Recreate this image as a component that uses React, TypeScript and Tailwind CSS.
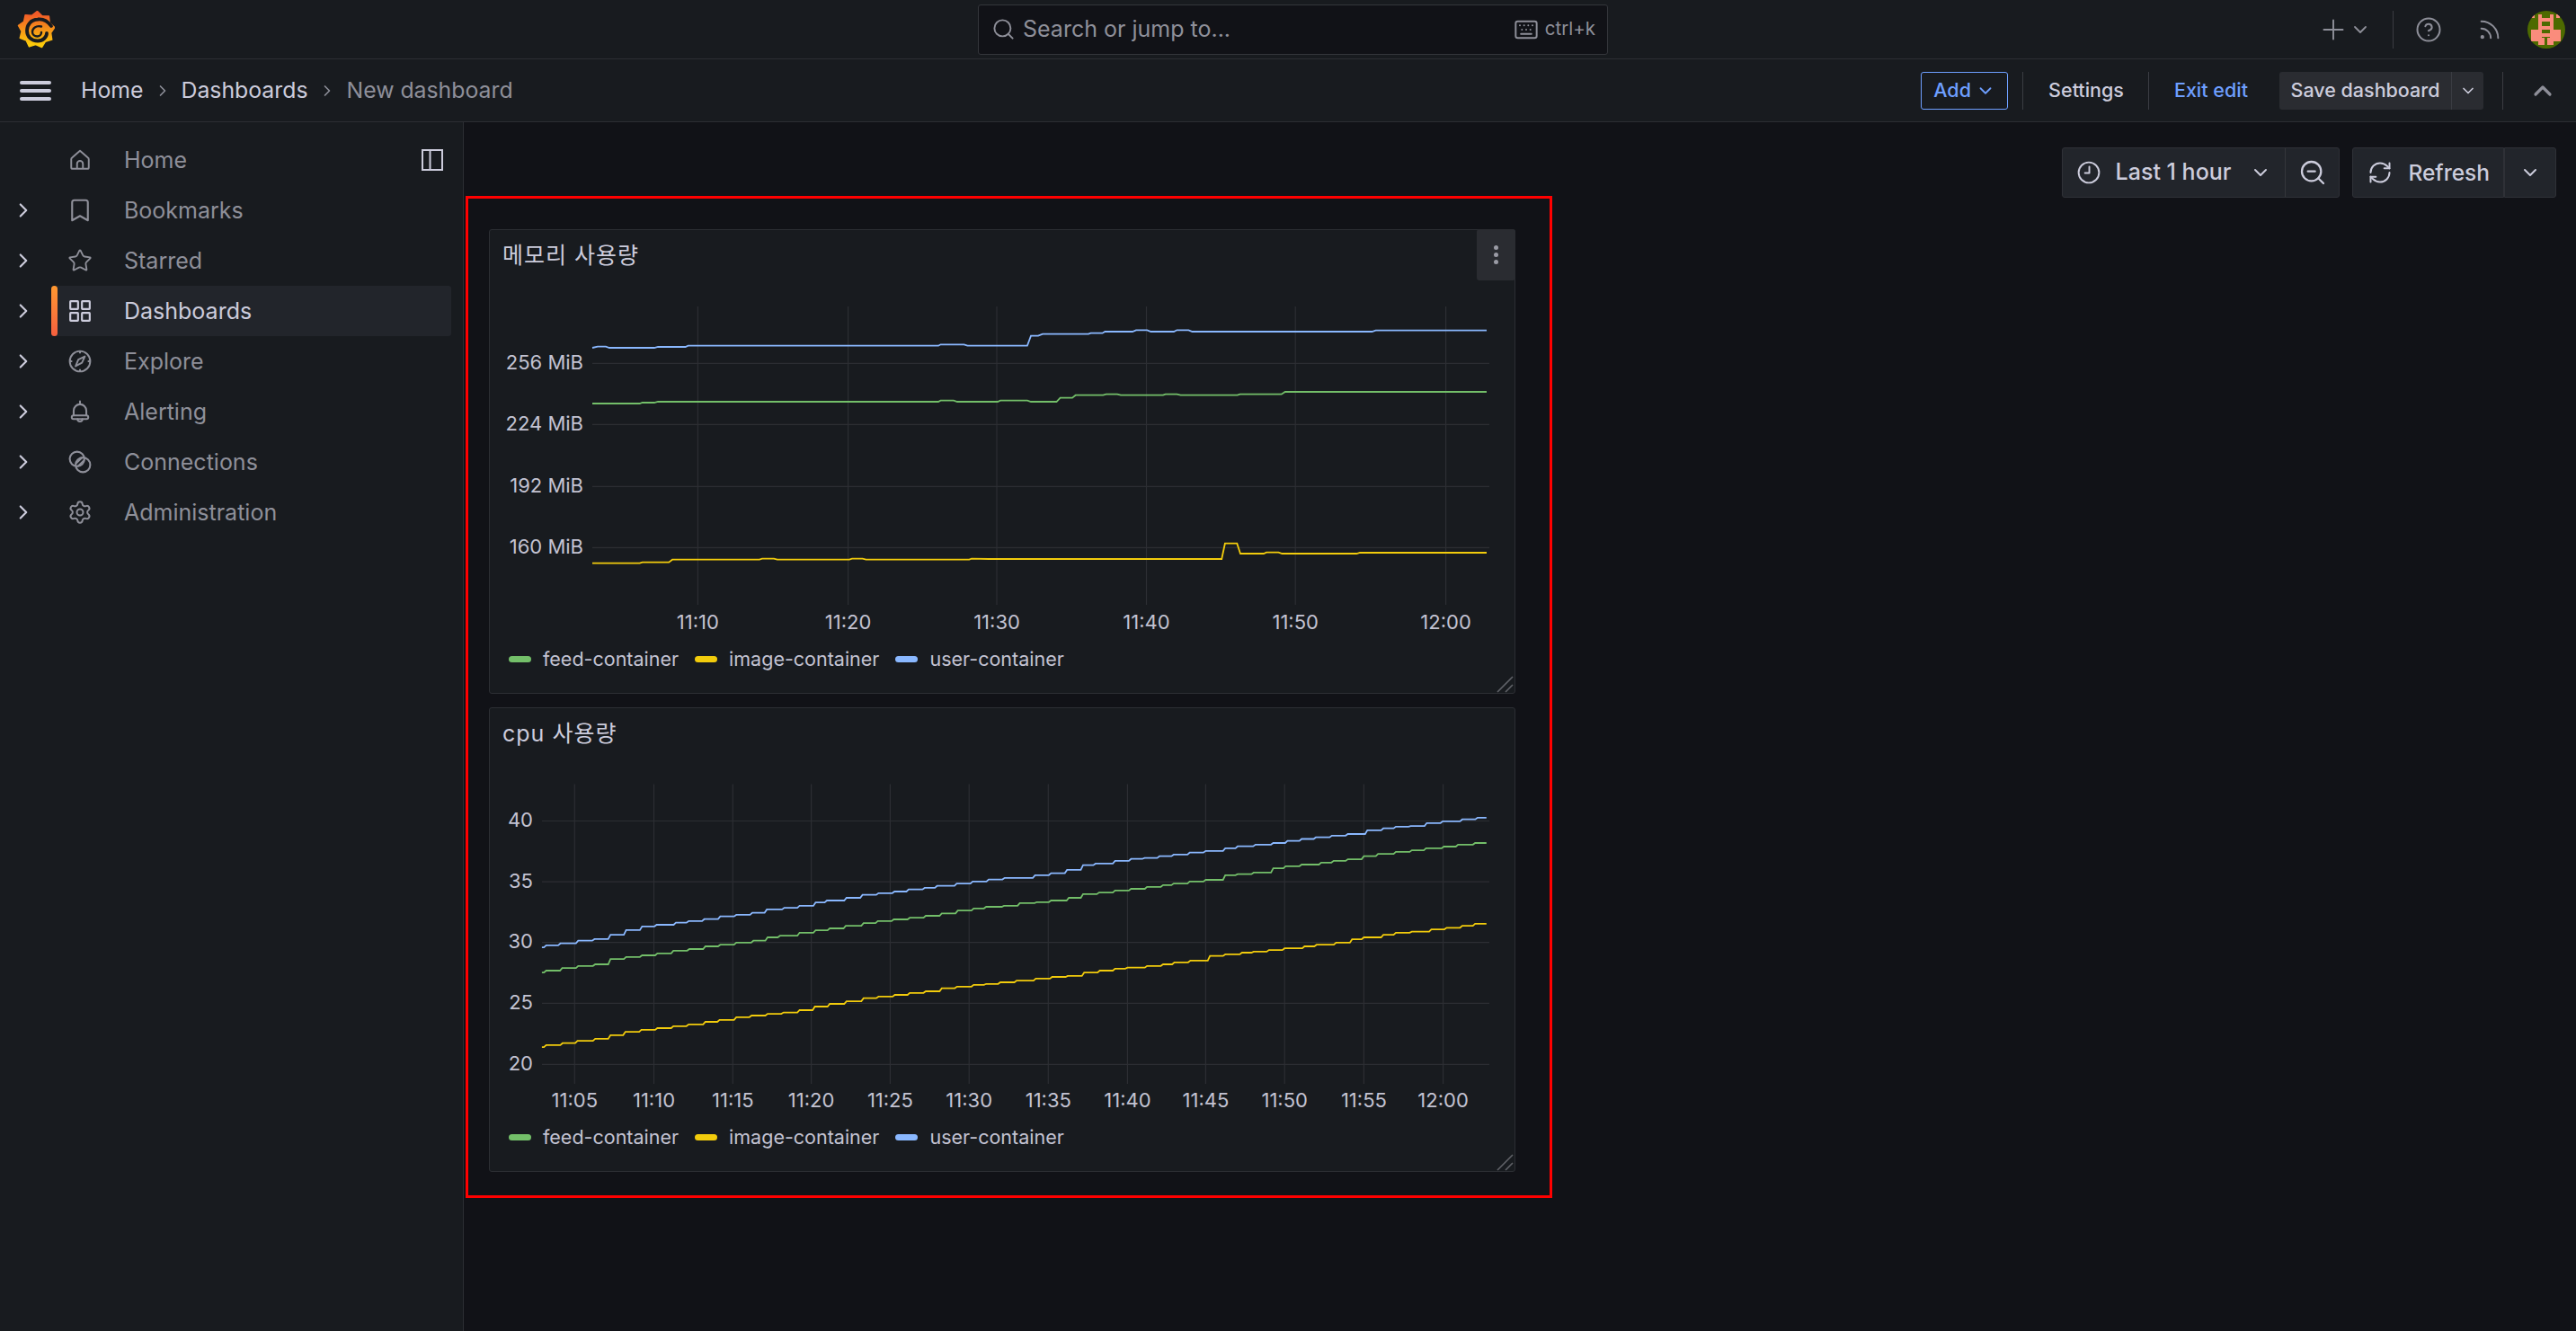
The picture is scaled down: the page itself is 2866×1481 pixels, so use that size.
import { Bookmark, ChevronDown, ChevronRight, ChevronUp, Keyboard, CircleHelp, Plus, RefreshCw, Rss, Search, Settings, Star, ZoomOut } from "lucide-react";
import type { ReactNode } from "react";

const GREEN = "#73bf69";
const YELLOW = "#f2cc0c";
const BLUE = "#8ab8ff";

function HomeIcon({ className }: { className?: string }) {
  return (
    <svg viewBox="0 0 24 24" fill="none" stroke="currentColor" strokeWidth="1.8" strokeLinejoin="round" className={className}>
      <path d="M12 2.5 3.8 9.6c-.5.4-.8 1-.8 1.6v8.3A1.5 1.5 0 0 0 4.5 21h15a1.5 1.5 0 0 0 1.5-1.5v-8.3c0-.6-.3-1.2-.8-1.6Z" />
      <path d="M9 21v-5a3 3 0 0 1 6 0v5" />
    </svg>
  );
}

function AppsIcon({ className }: { className?: string }) {
  return (
    <svg viewBox="0 0 24 24" fill="none" stroke="currentColor" strokeWidth="2" className={className}>
      <rect x="2" y="2" width="8" height="8" rx="0.5" />
      <rect x="14" y="2" width="8" height="8" rx="0.5" />
      <rect x="2" y="14" width="8" height="8" rx="0.5" />
      <rect x="14" y="14" width="8" height="8" rx="0.5" />
    </svg>
  );
}

function CompassIcon({ className }: { className?: string }) {
  return (
    <svg viewBox="0 0 24 24" fill="none" stroke="currentColor" strokeWidth="1.8" strokeLinejoin="round" className={className}>
      <circle cx="12" cy="12" r="10.5" />
      <path d="M12 1.5V4M12 20v2.5M1.5 12H4M20 12h2.5" />
      <path d="M17 7l-3 6.5L7.500 17l2.800-6.800Z" />
    </svg>
  );
}

function BellIcon({ className }: { className?: string }) {
  return (
    <svg viewBox="0 0 24 24" fill="none" stroke="currentColor" strokeWidth="1.9" strokeLinecap="round" strokeLinejoin="round" className={className}>
      <path d="M12 1.5v2.5" />
      <path d="M5.5 16v-5a6.5 6.5 0 0 1 13 0v5" />
      <rect x="3.5" y="16" width="17" height="3.6" rx="1.8" />
      <path d="M9.5 19.6a2.5 2.5 0 0 0 5 0" />
    </svg>
  );
}

function ConnectionsIcon({ className }: { className?: string }) {
  return (
    <svg viewBox="0 0 24 24" fill="none" stroke="currentColor" strokeWidth="1.9" strokeLinecap="round" className={className}>
      <circle cx="9" cy="9" r="7.5" />
      <circle cx="15" cy="15" r="7.5" />
      <path d="M8 13.5 13.5 8M10.5 16 16 10.5" />
    </svg>
  );
}

function ClockIcon({ className }: { className?: string }) {
  return (
    <svg viewBox="0 0 24 24" fill="none" stroke="currentColor" strokeWidth="1.8" strokeLinecap="round" strokeLinejoin="round" className={className}>
      <circle cx="12" cy="12" r="10.5" />
      <path d="M12.5 6v6.5H8" />
    </svg>
  );
}

function DockIcon({ className }: { className?: string }) {
  return (
    <svg viewBox="0 0 24 24" fill="none" stroke="currentColor" strokeWidth="2" className={className}>
      <rect x="1" y="1" width="22" height="22" />
      <path d="M9.5 1v22" />
    </svg>
  );
}

function Logo() {
  const points: string[] = [];
  const teeth = 9;
  for (let i = 0; i < teeth * 2; i++) {
    const r = i % 2 === 0 ? 20.5 : 16.5;
    const a = (i / (teeth * 2)) * Math.PI * 2 - Math.PI / 2 + 0.05;
    points.push(`${(21.5 + r * Math.cos(a)).toFixed(1)},${(21 + r * Math.sin(a)).toFixed(1)}`);
  }
  return (
    <svg viewBox="0 0 42 42" className="w-[42px] h-[42px]">
      <defs>
        <linearGradient id="logo-grad" x1="0" y1="0" x2="0" y2="1">
          <stop offset="8%" stopColor="#f05a28" />
          <stop offset="92%" stopColor="#fbca0a" />
        </linearGradient>
      </defs>
      <polygon points={points.join(" ")} fill="url(#logo-grad)" stroke="url(#logo-grad)" strokeWidth="1.5" strokeLinejoin="round" />
      <path d="M38 17C33 10 27 9 23 9.500C15 10 11 16 11 22C11 29 16 33.500 23 33.500C29 33.500 33 29 33 25" fill="none" stroke="#181b1f" strokeWidth="3.8" strokeLinecap="round" />
      <path d="M27 17.500C21 16 17 19.500 17 23.500C17 26.500 19.500 28.500 22.500 28.500C25 28.500 27 26.500 27 24" fill="none" stroke="#181b1f" strokeWidth="2.4" strokeLinecap="round" />
    </svg>
  );
}

// identicon, cells read off the screenshot
const AVATAR_CELLS = [
  [4, 4, 4, 4], [32, 4, 4, 4],
  [12, 4, 4, 17], [25, 4, 4, 17], [12, 8, 17, 4],
  [16, 17, 9, 4], [4, 21, 12, 13], [25, 21, 12, 13],
  [16, 25, 9, 4], [12, 34, 7, 4], [22, 34, 7, 4], [16, 30, 3, 4], [22, 30, 3, 4],
];

function Avatar() {
  return (
    <svg viewBox="0 0 42 42" className="w-[42px] h-[42px] shrink-0 rounded-full bg-[#4d6a00]">
      {AVATAR_CELLS.map(([x, y, w, h], i) => (
        <rect key={i} x={x} y={y} width={w} height={h} fill="#fa8c7c" />
      ))}
    </svg>
  );
}

function Divider({ className }: { className: string }) {
  return <div className={`w-px h-[42px] bg-[#3a3c42] shrink-0 ${className}`} />;
}

function TopBar() {
  return (
    <header className="h-[66px] shrink-0 grid grid-cols-[1088px_701px_1fr] items-center bg-[#181b1f] border-b border-[#2c2e33]">
      <div className="pl-[19px] pt-[1px]"><Logo /></div>
      <div className="h-[56px] flex items-center bg-[#111217] border border-[#34363b] rounded-[3px] text-[#8e8f99]">
        <Search className="w-[27px] h-[27px] ml-[14px]" strokeWidth={1.7} />
        <span className="ml-[8px] text-[25px]">Search or jump to...</span>
        <Keyboard className="w-[28px] h-[28px] ml-auto" strokeWidth={1.7} />
        <span className="ml-[7px] mr-[13px] text-[20.5px]">ctrl+k</span>
      </div>
      <div className="flex items-center justify-end pr-[12px] text-[#8e8f99]">
        <Plus className="w-[36px] h-[36px]" strokeWidth={1.3} />
        <ChevronDown className="w-[24px] h-[24px]" strokeWidth={1.8} />
        <Divider className="ml-[24px]" />
        <CircleHelp className="w-[30px] h-[30px] ml-[24px]" strokeWidth={1.6} />
        <Rss className="w-[28px] h-[28px] ml-[39px]" strokeWidth={1.7} />
        <div className="ml-[28px]"><Avatar /></div>
      </div>
    </header>
  );
}

function ChevronSep() {
  return <ChevronRight className="w-[20px] h-[20px] text-[#8e8f99] shrink-0" strokeWidth={2} />;
}

function SubBar() {
  return (
    <div className="h-[70px] shrink-0 flex items-center bg-[#181b1f] border-b border-[#2c2e33] text-[#ccccdc]">
      <div className="ml-[22px] w-[35px] flex flex-col gap-[5px]">
        <div className="h-[4px] rounded-full bg-[#ccccdc]" />
        <div className="h-[4px] rounded-full bg-[#ccccdc]" />
        <div className="h-[4px] rounded-full bg-[#ccccdc]" />
      </div>
      <span className="ml-[33px] text-[24.8px]">Home</span>
      <div className="ml-[12px]"><ChevronSep /></div>
      <span className="ml-[10px] text-[24.8px]">Dashboards</span>
      <div className="ml-[12px]"><ChevronSep /></div>
      <span className="ml-[11px] text-[24.8px] text-[#8e8f99]">New dashboard</span>
      <div className="ml-auto flex items-center text-[21.5px] font-medium">
        <div className="w-[97px] h-[42px] flex items-center justify-center gap-[5px] border border-[#6e9fff] rounded-[3px] text-[#6e9fff]">
          Add <ChevronDown className="w-[22px] h-[22px]" strokeWidth={2} />
        </div>
        <Divider className="ml-[16px]" />
        <span className="ml-[28px]">Settings</span>
        <Divider className="ml-[27px]" />
        <span className="ml-[28px] text-[#6e9fff]">Exit edit</span>
        <div className="ml-[35px] flex h-[42px] rounded-[3px] bg-[#2a2c31]">
          <div className="w-[191px] flex items-center justify-center">Save dashboard</div>
          <div className="w-[36px] flex items-center justify-center border-l border-[#3a3c42]">
            <ChevronDown className="w-[20px] h-[20px]" strokeWidth={2} />
          </div>
        </div>
        <Divider className="ml-[21px]" />
        <ChevronUp className="ml-[28px] mr-[21px] w-[32px] h-[32px] text-[#8e8f99]" strokeWidth={2.4} />
      </div>
    </div>
  );
}

const NAV: { label: string; icon: ReactNode; chevron: boolean; active?: boolean; dock?: boolean }[] = [
  { label: "Home", icon: <HomeIcon className="w-[26px] h-[26px]" />, chevron: false, dock: true },
  { label: "Bookmarks", icon: <Bookmark className="w-[30px] h-[30px]" strokeWidth={1.7} />, chevron: true },
  { label: "Starred", icon: <Star className="w-[28px] h-[28px]" strokeWidth={1.6} />, chevron: true },
  { label: "Dashboards", icon: <AppsIcon className="w-[26px] h-[26px]" />, chevron: true, active: true },
  { label: "Explore", icon: <CompassIcon className="w-[26px] h-[26px]" />, chevron: true },
  { label: "Alerting", icon: <BellIcon className="w-[26px] h-[26px]" />, chevron: true },
  { label: "Connections", icon: <ConnectionsIcon className="w-[26px] h-[26px]" />, chevron: true },
  { label: "Administration", icon: <Settings className="w-[28px] h-[28px]" strokeWidth={1.7} />, chevron: true },
];

function Sidebar() {
  return (
    <aside className="w-[516px] shrink-0 bg-[#181b1f] border-r border-[#2c2e33] pt-[14px] pr-[13px]">
      {NAV.map((item) => (
        <div key={item.label} className="flex items-center h-[56px]">
          <div className="w-[57px] flex justify-center pr-[5px] text-[#ccccdc]">
            {item.chevron && <ChevronRight className="w-[26px] h-[26px]" strokeWidth={2} />}
          </div>
          <div className={`relative flex-1 h-full flex items-center rounded-[3px] ${item.active ? "bg-[#22252b] text-[#ccccdc]" : "text-[#8e8f99]"}`}>
            {item.active && <div className="absolute left-0 top-0 bottom-0 w-[7px] rounded-full bg-gradient-to-b from-[#ff9830] to-[#f55f3e]" />}
            <div className="w-[64px] h-full flex items-center justify-center">{item.icon}</div>
            <span className="ml-[17px] pt-[2px] text-[25px]">{item.label}</span>
            {item.dock && <DockIcon className="ml-auto mr-[9px] w-[24px] h-[24px] text-[#ccccdc]" />}
          </div>
        </div>
      ))}
    </aside>
  );
}

function TimeControls() {
  return (
    <div className="h-[82px] shrink-0 flex justify-end items-start pt-[28px] pr-[22px] text-[#ccccdc]">
      <div className="h-[56px] flex items-center bg-[#22252b] border border-[#2f3137] rounded-[3px]">
        <ClockIcon className="ml-[16px] w-[26px] h-[26px]" />
        <span className="ml-[17px] text-[25px] font-medium">Last 1 hour</span>
        <ChevronDown className="ml-[21px] w-[24px] h-[24px]" strokeWidth={2} />
        <div className="ml-[15px] h-full w-[60px] flex items-center justify-center border-l border-[#34363b]">
          <ZoomOut className="w-[32px] h-[32px]" strokeWidth={1.7} />
        </div>
      </div>
      <div className="ml-[14px] h-[56px] flex items-center bg-[#22252b] border border-[#2f3137] rounded-l-[3px]">
        <RefreshCw className="ml-[16px] w-[28px] h-[28px]" strokeWidth={1.7} />
        <span className="ml-[17px] mr-[15px] text-[24.5px] font-medium">Refresh</span>
      </div>
      <div className="h-[56px] w-[58px] flex items-center justify-center bg-[#22252b] border border-[#2f3137] rounded-r-[3px]">
        <ChevronDown className="w-[24px] h-[24px]" strokeWidth={2} />
      </div>
    </div>
  );
}

function ResizeHandle() {
  return (
    <svg viewBox="0 0 20 20" className="absolute right-0 bottom-0 w-[20px] h-[20px]" stroke="#5f6167" strokeWidth="1.7">
      <path d="M1 19 18 2M10 19l8-8" />
    </svg>
  );
}

function Legend({ className }: { className: string }) {
  const items = [
    { label: "feed-container", color: "bg-[#73bf69]" },
    { label: "image-container", color: "bg-[#f2cc0c]" },
    { label: "user-container", color: "bg-[#8ab8ff]" },
  ];
  return (
    <div className={`flex items-center pl-[21px] text-[21.5px] text-[#c3c3d2] ${className}`}>
      {items.map((it) => (
        <div key={it.label} className="flex items-center mr-[18px]">
          <div className={`w-[25px] h-[7px] rounded-full ${it.color}`} />
          <span className="ml-[13px]">{it.label}</span>
        </div>
      ))}
    </div>
  );
}

function Panel({ title, titleClass, menu, children }: { title: string; titleClass: string; menu?: boolean; children: ReactNode }) {
  return (
    <section className="relative flex flex-col h-[517px] bg-[#181b1f] border border-[#2c2e33] rounded-[3px]">
      <h2 className={`flex items-center pl-[14px] pt-[1px] text-[25px] tracking-[1px] font-normal text-[#ccccdc] ${titleClass}`}>{title}</h2>
      {children}
      {menu && (
        <div className="absolute -top-px -right-px w-[43px] h-[57px] flex flex-col items-center justify-center gap-[3px] bg-[#2a2c31] rounded-[3px]">
          <div className="w-[5px] h-[5px] rounded-full bg-[#9a9ba5]" />
          <div className="w-[5px] h-[5px] rounded-full bg-[#9a9ba5]" />
          <div className="w-[5px] h-[5px] rounded-full bg-[#9a9ba5]" />
        </div>
      )}
      <ResizeHandle />
    </section>
  );
}

const GRID = "#2c2e33";
const TICK = "#c3c3d2";
const TICK_SIZE = "22";

const poly = (pts: number[][]) => pts.map((p) => p.join(",")).join(" ");

// memory series, real page coordinates
const MEM_BLUE = [[659,387],[665,385.700],[674,385.700],[678,387],[728,387],[732,386],[762.600,386],[765.600,384.700],[1044,384.700],[1046.500,383.300],[1072.600,383.300],[1076.400,384.700],[1142.900,384.700],[1147,373.700],[1155,373.700],[1160,371.700],[1211,371.700],[1213.500,370.700],[1226.500,370.700],[1229.400,369],[1260,369],[1264,367.300],[1276.300,367.300],[1280.400,369],[1306,369],[1309.400,367.300],[1322.400,367.300],[1326.500,369],[1526.500,369],[1530.600,367.700],[1654,367.700]];
const MEM_GREEN = [[659,449],[711.700,449],[714.700,448],[728,448],[732,447],[1044,447],[1046.500,445.700],[1061,445.700],[1065,447],[1110,447],[1113,445.700],[1143,445.700],[1147,447],[1175.500,447],[1179.600,442.700],[1193,442.700],[1196.700,439.700],[1227.300,439.700],[1230.600,438.700],[1243,438.700],[1247,439.700],[1293.900,439.700],[1296.700,438.700],[1309.400,438.700],[1313.500,439.700],[1376.700,439.700],[1379.600,438.700],[1425.700,438.700],[1429.800,436],[1654,436]];
const MEM_YELLOW = [[659,626.700],[711.700,626.700],[714.700,625.700],[744.200,625.700],[748,622.700],[844.900,622.700],[848,621.700],[861,621.700],[864.800,622.700],[945,622.700],[948,621.700],[959.700,621.700],[963.500,622.700],[1078.300,622.700],[1081,621.700],[1100,622],[1359.200,622],[1362.900,604.700],[1376.300,604.700],[1380,616],[1406,616],[1409,614.700],[1422.400,614.700],[1426.500,616],[1509.400,616],[1513,615],[1654,615]];

function MemoryChart() {
  const vx = [776.4, 943.6, 1109, 1275.5, 1441.2, 1608.6];
  const times = ["11:10", "11:20", "11:30", "11:40", "11:50", "12:00"];
  const hy = [
    { y: 404.3, label: "256 MiB" },
    { y: 472.3, label: "224 MiB" },
    { y: 541.3, label: "192 MiB" },
    { y: 609.3, label: "160 MiB" },
  ];
  return (
    <svg viewBox="545 312 1140 399" className="w-[1140px] h-[399px] block shrink-0">
      {vx.map((x) => <line key={x} x1={x} x2={x} y1={341} y2={673} stroke={GRID} strokeWidth="1.2" />)}
      {hy.map((h) => (
        <g key={h.label}>
          <line x1={659} x2={1657} y1={h.y} y2={h.y} stroke={GRID} strokeWidth="1.2" />
          <text x={649} y={h.y - 1.5} textAnchor="end" dominantBaseline="central" fontSize={TICK_SIZE} fill={TICK}>{h.label}</text>
        </g>
      ))}
      {vx.map((x, i) => <text key={x} x={x} y={692} textAnchor="middle" dominantBaseline="central" fontSize={TICK_SIZE} fill={TICK}>{times[i]}</text>)}
      <polyline points={poly(MEM_GREEN)} fill="none" stroke={GREEN} strokeWidth="1.8" />
      <polyline points={poly(MEM_YELLOW)} fill="none" stroke={YELLOW} strokeWidth="1.8" />
      <polyline points={poly(MEM_BLUE)} fill="none" stroke={BLUE} strokeWidth="1.8" />
    </svg>
  );
}

// cpu series as [x, y] step starts measured on two crops of the reference
const z1 = ([x, y]: number[]) => [510 + x / 2.529, 760 + y / 2.703];
const z2 = ([x, y]: number[]) => [1120 + x / 2.529, 760 + y / 2.703];

function stepped(a: number[][], b: number[][], endX: number) {
  const segs = [...a.map(z1), ...b.map(z2)];
  const pts: number[][] = [];
  segs.forEach(([x, y], i) => {
    const next = segs[i + 1];
    pts.push([x, y]);
    pts.push([next ? next[0] - 2.5 : endX, y]);
  });
  return pts.map(([x, y]) => [+x.toFixed(1), +y.toFixed(1)]);
}

const CPU_BLUE = stepped(
  [[235,795],[247,789],[287,783],[337,775],[383,770],[428,757],[472,743],[517,732],[558,727],[612,721],[648,716],[692,710],[737,702],[782,697],[827,691],[868,681],[917,676],[960,670],[1005,660],[1037,654],[1092,646],[1137,637],[1182,632],[1227,627],[1267,621],[1312,616],[1347,610],[1402,603],[1447,597],[1492,591],[1537,586]],
  [[80,578],[125,572],[170,562],[215,548],[250,543],[305,535],[350,529],[388,526],[430,521],[470,516],[515,510],[560,505],[615,497],[650,491],[700,486],[750,481],[790,475],[830,469],[870,464],[915,459],[960,454],[1015,443],[1060,437],[1095,432],[1137,430],[1182,421],[1227,416],[1282,410],[1325,405]],
  1653.8,
);
const CPU_GREEN = stepped(
  [[235,871],[247,865],[292,857],[337,851],[385,846],[428,830],[472,824],[517,819],[560,813],[605,805],[650,800],[695,792],[737,787],[782,781],[830,775],[870,765],[905,760],[960,751],[1005,744],[1045,738],[1090,730],[1140,722],[1180,716],[1225,711],[1270,706],[1315,700],[1360,693],[1405,684],[1450,678],[1485,673],[1535,670]],
  [[37,662],[85,659],[125,654],[175,646],[215,635],[260,630],[305,624],[350,619],[395,613],[440,608],[470,603],[515,597],[560,592],[615,578],[650,575],[695,570],[750,557],[785,551],[830,546],[885,540],[920,535],[960,530],[1005,521],[1045,514],[1095,508],[1140,503],[1180,497],[1230,492],[1270,486],[1318,481]],
  1653.8,
);
const CPU_YELLOW = stepped(
  [[235,1095],[247,1089],[293,1083],[335,1076],[385,1070],[428,1059],[470,1049],[515,1043],[560,1038],[605,1032],[648,1027],[695,1019],[735,1013],[782,1005],[825,1000],[870,995],[915,991],[960,984],[1003,973],[1045,965],[1092,957],[1140,948],[1182,943],[1228,938],[1270,932],[1315,927],[1360,918],[1403,913],[1450,908],[1485,905],[1525,900]],
  [[28,895],[82,889],[128,884],[172,881],[218,871],[262,865],[305,859],[340,856],[395,851],[440,846],[472,840],[517,835],[572,821],[615,816],[662,811],[695,808],[738,803],[782,798],[838,792],[872,787],[927,781],[972,771],[1005,765],[1060,757],[1095,751],[1140,748],[1195,741],[1238,736],[1282,730],[1318,724]],
  1653.8,
);

function CpuChart() {
  const vx = [639.3, 727.5, 815.3, 902.6, 990.4, 1078.2, 1166.3, 1254.4, 1341.4, 1429.2, 1517.4, 1605.6];
  const times = ["11:05", "11:10", "11:15", "11:20", "11:25", "11:30", "11:35", "11:40", "11:45", "11:50", "11:55", "12:00"];
  const hy = [
    { y: 913.5, label: "40" },
    { y: 981.2, label: "35" },
    { y: 1048.6, label: "30" },
    { y: 1116.3, label: "25" },
    { y: 1184.3, label: "20" },
  ];
  return (
    <svg viewBox="545 845 1140 398" className="w-[1140px] h-[398px] block shrink-0">
      {vx.map((x) => <line key={x} x1={x} x2={x} y1={872.5} y2={1206} stroke={GRID} strokeWidth="1.2" />)}
      {hy.map((h) => (
        <g key={h.label}>
          <line x1={603} x2={1657} y1={h.y} y2={h.y} stroke={GRID} strokeWidth="1.2" />
          <text x={593} y={h.y - 1.5} textAnchor="end" dominantBaseline="central" fontSize={TICK_SIZE} fill={TICK}>{h.label}</text>
        </g>
      ))}
      {vx.map((x, i) => <text key={x} x={x} y={1223.5} textAnchor="middle" dominantBaseline="central" fontSize={TICK_SIZE} fill={TICK}>{times[i]}</text>)}
      <polyline points={poly(CPU_GREEN)} fill="none" stroke={GREEN} strokeWidth="1.8" />
      <polyline points={poly(CPU_YELLOW)} fill="none" stroke={YELLOW} strokeWidth="1.8" />
      <polyline points={poly(CPU_BLUE)} fill="none" stroke={BLUE} strokeWidth="1.8" />
    </svg>
  );
}

export default function App() {
  return (
    <div className="w-[2866px] h-[1481px] overflow-hidden flex flex-col bg-[#111217] font-[Inter,'Noto_Sans_CJK_KR',sans-serif]">
      <TopBar />
      <SubBar />
      <div className="flex-1 flex min-h-0">
        <Sidebar />
        <main className="flex-1 flex flex-col min-w-0">
          <TimeControls />
          <div className="ml-[2px] w-[1209px] h-[1115px] border-[3px] border-[#ff0000] pt-[34px] pl-[23px] flex flex-col gap-[15px]">
            <div className="w-[1142px] flex flex-col gap-[15px]">
              <Panel title="메모리 사용량" titleClass="h-[56px]" menu>
                <MemoryChart />
                <Legend className="h-[44px]" />
              </Panel>
              <Panel title="cpu 사용량" titleClass="h-[57px]">
                <CpuChart />
                <Legend className="h-[45px]" />
              </Panel>
            </div>
          </div>
        </main>
      </div>
    </div>
  );
}
